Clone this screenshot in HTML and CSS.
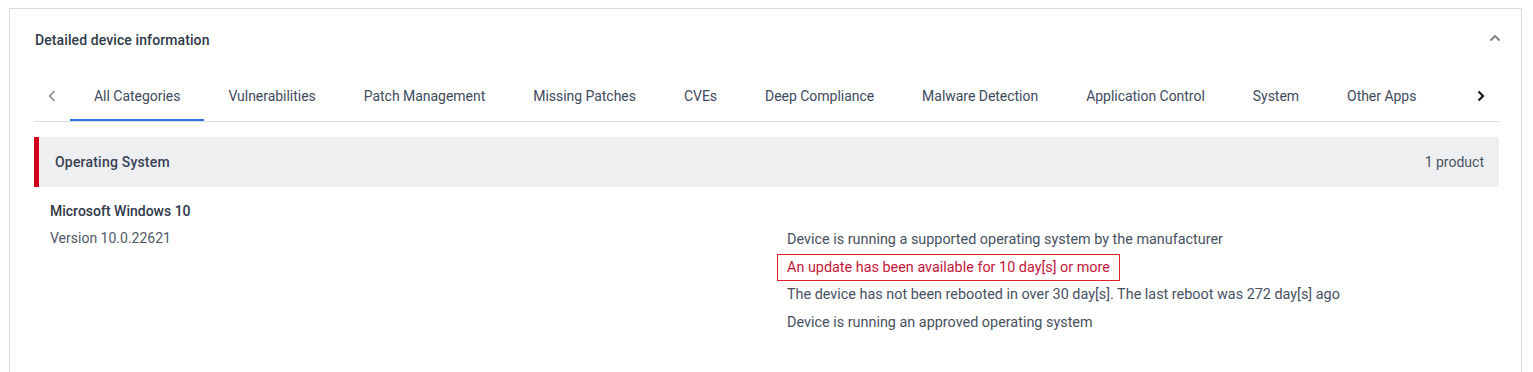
FILE: index.html
```html
<!DOCTYPE html>
<html lang="en">
<head>
    <meta charset="UTF-8">
    <meta name="viewport" content="width=device-width, initial-scale=1.0">
    <title>Detailed device information</title>
    <link rel="stylesheet" href="styles.css">
</head>
<body>

    <div class="card">
        <div class="card-header">
            <h3>Detailed device information</h3>
            <svg class="collapse" width="12" height="8" viewBox="0 0 12 8"><path d="M1.5 6.5 L6 2 L10.5 6.5" fill="none" stroke="#777c84" stroke-width="1.8"/></svg>
        </div>

        <div class="tabs">
            <span class="tab-arrow">
                <svg width="8" height="12" viewBox="0 0 8 12"><path d="M6.5 1 L1.8 6 L6.5 11" fill="none" stroke="#8c9098" stroke-width="1.8"/></svg>
            </span>
            <div class="tab-list">
                <a class="tab active" href="#">All Categories</a>
                <a class="tab" href="#">Vulnerabilities</a>
                <a class="tab" href="#">Patch Management</a>
                <a class="tab" href="#">Missing Patches</a>
                <a class="tab" href="#">CVEs</a>
                <a class="tab" href="#">Deep Compliance</a>
                <a class="tab" href="#">Malware Detection</a>
                <a class="tab" href="#">Application Control</a>
                <a class="tab" href="#">System</a>
                <a class="tab" href="#">Other Apps</a>
            </div>
            <span class="tab-arrow">
                <svg width="8" height="12" viewBox="0 0 8 12"><path d="M1.5 1.5 L6 6 L1.5 10.5" fill="none" stroke="#111" stroke-width="2.2"/></svg>
            </span>
        </div>

        <div class="section-head">
            <span class="section-title">Operating System</span>
            <span class="section-count">1 product</span>
        </div>

        <div class="product">
            <div class="product-info">
                <div class="product-name">Microsoft Windows 10</div>
                <div class="product-version">Version 10.0.22621</div>
            </div>
            <ul class="checks">
                <li>Device is running a supported operating system by the manufacturer</li>
                <li class="warn">An update has been available for 10 day[s] or more</li>
                <li>The device has not been rebooted in over 30 day[s]. The last reboot was 272 day[s] ago</li>
                <li>Device is running an approved operating system</li>
            </ul>
        </div>
    </div>

</body>
</html>
```

FILE: styles.css
```css
body {
    margin: 8px;
    font-family: Roboto, "Liberation Sans", sans-serif;
    font-size: 14px;
    color: #434d5c;
    background-color: #fff;
}
.card {
    border: 1px solid #d6dae1;
    border-bottom: none;
    padding: 0 22px 40px 24px;
    margin-left: 1px;
    width: 1465px;
}
.card-header {
    height: 62px;
    display: flex;
    align-items: center;
    justify-content: space-between;
}
.card-header h3 {
    margin: 0 0 0 1px;
    font-size: 14px;
    font-weight: 500;
    color: #2f3948;
    letter-spacing: 0.1px;
}
.collapse {
    margin-right: -2px;
    margin-top: -4px;
}
.tabs {
    display: flex;
    align-items: stretch;
    height: 50px;
    border-bottom: 1px solid #d8dbe1;
}
.tab-arrow {
    width: 36px;
    display: flex;
    align-items: center;
    justify-content: center;
    flex-shrink: 0;
}
.tab-list {
    flex: 1;
    display: flex;
    overflow: hidden;
}
.tab {
    padding: 2px 24px 0;
    display: flex;
    align-items: center;
    text-decoration: none;
    color: #3e4a5c;
    white-space: nowrap;
    letter-spacing: -0.03px;
    border-bottom: 2px solid transparent;
}
.tab.active {
    border-bottom-color: #2f72e6;
}
.section-head {
    margin-top: 15px;
    height: 50px;
    background-color: #eeeff1;
    border-left: 5px solid #d0021b;
    display: flex;
    align-items: center;
    justify-content: space-between;
    padding: 0 15px 0 16px;
}
.section-title {
    font-weight: 500;
    color: #364154;
    letter-spacing: 0.2px;
}
.section-count {
    color: #4a5463;
}
.product {
    display: grid;
    grid-template-columns: 727px 1fr;
    padding: 14px 16px 0;
}
.product-name {
    font-weight: 500;
    color: #2f3948;
    line-height: 20px;
}
.product-version {
    margin-top: 7px;
    line-height: 20px;
    color: #505a68;
}
.checks {
    list-style: none;
    margin: 0;
    padding: 25px 0 0;
    font-size: 14.4px;
}
.checks li {
    line-height: 19.5px;
    padding: 3px 9px;
    border: 1px solid transparent;
    width: max-content;
    color: #47515f;
}
.checks li.warn {
    color: #c4173a;
    border-color: #e2202c;
}
```
